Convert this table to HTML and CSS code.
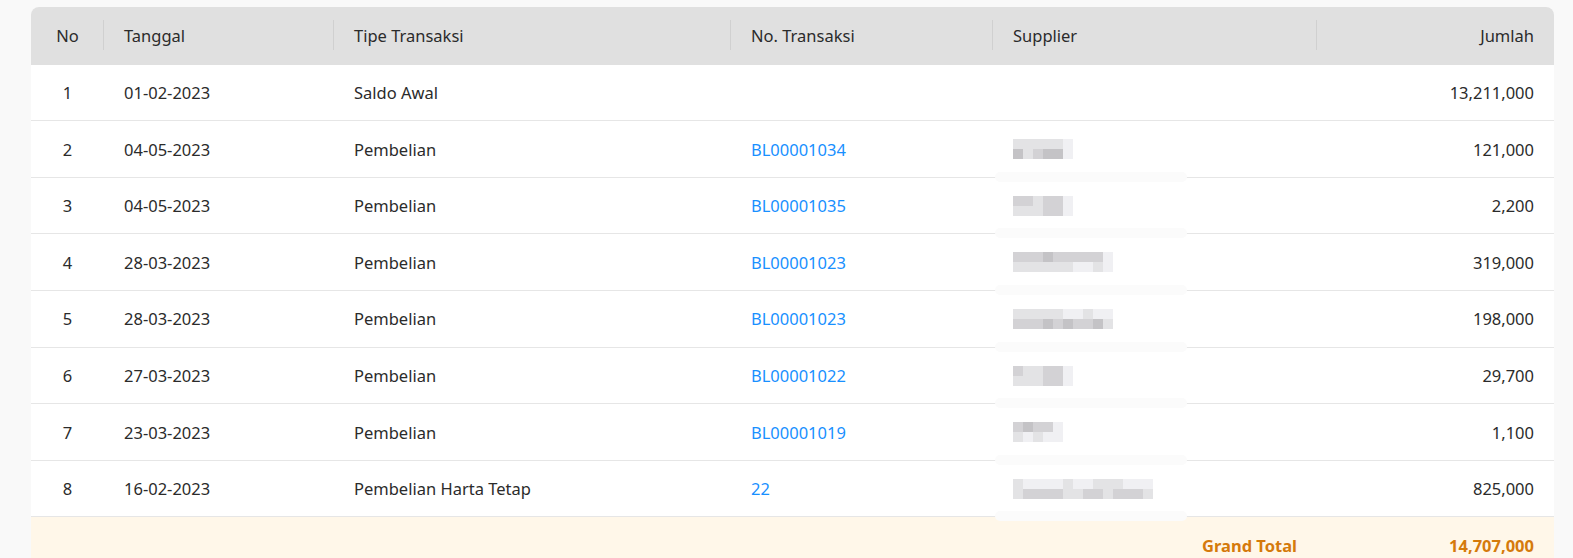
FILE: index.html
```html
<!DOCTYPE html>
<html lang="id">
<head>
<meta charset="utf-8">
<title>Laporan Transaksi Supplier</title>
<link rel="stylesheet" href="styles.css">
</head>
<body>
<div class="card">
  <table class="tbl">
    <colgroup>
      <col class="c-no"><col class="c-date"><col class="c-type"><col class="c-trx"><col class="c-sup"><col class="c-amt">
    </colgroup>
    <thead>
      <tr>
        <th class="center">No</th>
        <th>Tanggal</th>
        <th>Tipe Transaksi</th>
        <th>No. Transaksi</th>
        <th>Supplier</th>
        <th class="right">Jumlah</th>
      </tr>
    </thead>
    <tbody>
      <tr>
        <td class="center">1</td><td>01-02-2023</td><td>Saldo Awal</td><td></td><td class="sup plain"></td><td class="right">13,211,000</td>
      </tr>
      <tr>
        <td class="center">2</td><td>04-05-2023</td><td>Pembelian</td><td><a href="#">BL00001034</a></td>
        <td class="sup"><span class="px w6">
          <i class="g3"></i><i class="g3"></i><i class="g3"></i><i class="g3"></i><i class="g3"></i><i class="g4"></i>
          <i class="g1"></i><i class="g3"></i><i class="g2"></i><i class="g1"></i><i class="g1"></i><i class="g4"></i>
        </span></td>
        <td class="right">121,000</td>
      </tr>
      <tr>
        <td class="center">3</td><td>04-05-2023</td><td>Pembelian</td><td><a href="#">BL00001035</a></td>
        <td class="sup"><span class="px w6">
          <i class="g2"></i><i class="g2"></i><i class="g3"></i><i class="g2"></i><i class="g2"></i><i class="g4"></i>
          <i class="g3"></i><i class="g3"></i><i class="g3"></i><i class="g2"></i><i class="g2"></i><i class="g4"></i>
        </span></td>
        <td class="right">2,200</td>
      </tr>
      <tr>
        <td class="center">4</td><td>28-03-2023</td><td>Pembelian</td><td><a href="#">BL00001023</a></td>
        <td class="sup"><span class="px w10">
          <i class="g2"></i><i class="g2"></i><i class="g2"></i><i class="g1"></i><i class="g2"></i><i class="g2"></i><i class="g2"></i><i class="g2"></i><i class="g2"></i><i class="g4"></i>
          <i class="g3"></i><i class="g3"></i><i class="g3"></i><i class="g3"></i><i class="g3"></i><i class="g3"></i><i class="g4"></i><i class="g4"></i><i class="g3"></i><i class="g4"></i>
        </span></td>
        <td class="right">319,000</td>
      </tr>
      <tr>
        <td class="center">5</td><td>28-03-2023</td><td>Pembelian</td><td><a href="#">BL00001023</a></td>
        <td class="sup"><span class="px w10">
          <i class="g3"></i><i class="g3"></i><i class="g3"></i><i class="g3"></i><i class="g3"></i><i class="g4"></i><i class="g4"></i><i class="g3"></i><i class="g4"></i><i class="g4"></i>
          <i class="g2"></i><i class="g2"></i><i class="g2"></i><i class="g1"></i><i class="g2"></i><i class="g1"></i><i class="g2"></i><i class="g2"></i><i class="g1"></i><i class="g3"></i>
        </span></td>
        <td class="right">198,000</td>
      </tr>
      <tr>
        <td class="center">6</td><td>27-03-2023</td><td>Pembelian</td><td><a href="#">BL00001022</a></td>
        <td class="sup"><span class="px w6">
          <i class="g2"></i><i class="g3"></i><i class="g3"></i><i class="g2"></i><i class="g2"></i><i class="g4"></i>
          <i class="g3"></i><i class="g3"></i><i class="g3"></i><i class="g2"></i><i class="g2"></i><i class="g4"></i>
        </span></td>
        <td class="right">29,700</td>
      </tr>
      <tr>
        <td class="center">7</td><td>23-03-2023</td><td>Pembelian</td><td><a href="#">BL00001019</a></td>
        <td class="sup"><span class="px w5">
          <i class="g2"></i><i class="g1"></i><i class="g2"></i><i class="g2"></i><i class="g4"></i>
          <i class="g3"></i><i class="g4"></i><i class="g3"></i><i class="g4"></i><i class="g4"></i>
        </span></td>
        <td class="right">1,100</td>
      </tr>
      <tr>
        <td class="center">8</td><td>16-02-2023</td><td>Pembelian Harta Tetap</td><td><a href="#">22</a></td>
        <td class="sup"><span class="px w14">
          <i class="g3"></i><i class="g4"></i><i class="g4"></i><i class="g4"></i><i class="g4"></i><i class="g3"></i><i class="g4"></i><i class="g4"></i><i class="g3"></i><i class="g3"></i><i class="g3"></i><i class="g4"></i><i class="g4"></i><i class="g4"></i>
          <i class="g3"></i><i class="g2"></i><i class="g2"></i><i class="g2"></i><i class="g2"></i><i class="g3"></i><i class="g3"></i><i class="g2"></i><i class="g2"></i><i class="g3"></i><i class="g2"></i><i class="g2"></i><i class="g2"></i><i class="g3"></i>
        </span></td>
        <td class="right">825,000</td>
      </tr>
      <tr class="total">
        <td></td><td></td><td></td><td></td>
        <td class="right">Grand Total</td>
        <td class="right">14,707,000</td>
      </tr>
    </tbody>
  </table>
</div>
</body>
</html>
```
FILE: styles.css
```css
html, body {
  margin: 0;
  background: #f9f9f9;
}
body {
  padding: 7px 19px 0 31px;
  font-family: "Noto Sans", "Open Sans", Arial, sans-serif;
  font-size: 16.5px;
  color: #2b2b2b;
}
.card {
  background: #fff;
  border-radius: 8px 8px 0 0;
  overflow: hidden;
}
.tbl {
  width: 100%;
  border-collapse: collapse;
  table-layout: fixed;
}
.c-no { width: 73px; }
.c-date { width: 230px; }
.c-type { width: 397px; }
.c-trx { width: 262px; }
.c-sup { width: 324px; }
.c-amt { width: 237px; }

.tbl th,
.tbl td {
  padding: 16.5px 20px 15.5px;
  line-height: 23.6px;
  text-align: left;
  font-weight: 400;
  white-space: nowrap;
}
.tbl th {
  padding-bottom: 16.5px;
  background: #e0e0e0;
  border-bottom: 1px solid #e0e0e0;
  position: relative;
}
.tbl th::before {
  content: "";
  position: absolute;
  right: 0;
  top: 50%;
  width: 1px;
  height: 30px;
  transform: translateY(-50%);
  background: #d0d0d0;
}
.tbl th:last-child::before { display: none; }
.tbl td {
  border-bottom: 1px solid #e6e6e6;
}
.tbl .center { text-align: center; }
.tbl .right { text-align: right; }

.tbl a {
  color: #1890ff;
  text-decoration: none;
}

.sup {
  position: relative;
}
.sup::after {
  content: "";
  position: absolute;
  left: 2px;
  width: 192px;
  bottom: -5px;
  height: 10px;
  border-radius: 5px;
  background: #fbfbfb;
}
.sup.plain::after { display: none; }

.px {
  display: inline-grid;
  grid-auto-rows: 10px;
  vertical-align: middle;
  margin-top: -4px;
}
.px.w5 { grid-template-columns: repeat(5, 10px); }
.px.w6 { grid-template-columns: repeat(6, 10px); }
.px.w10 { grid-template-columns: repeat(10, 10px); }
.px.w14 { grid-template-columns: repeat(14, 10px); }
.px i { display: block; }
.g1 { background: #c4c3c6; }
.g2 { background: #d3d2d5; }
.g3 { background: #e3e3e5; }
.g4 { background: #f0f0f3; }

.total td {
  background: #fff7e9;
  border-bottom: none;
  color: #d57a0c;
  font-weight: 700;
}
```
